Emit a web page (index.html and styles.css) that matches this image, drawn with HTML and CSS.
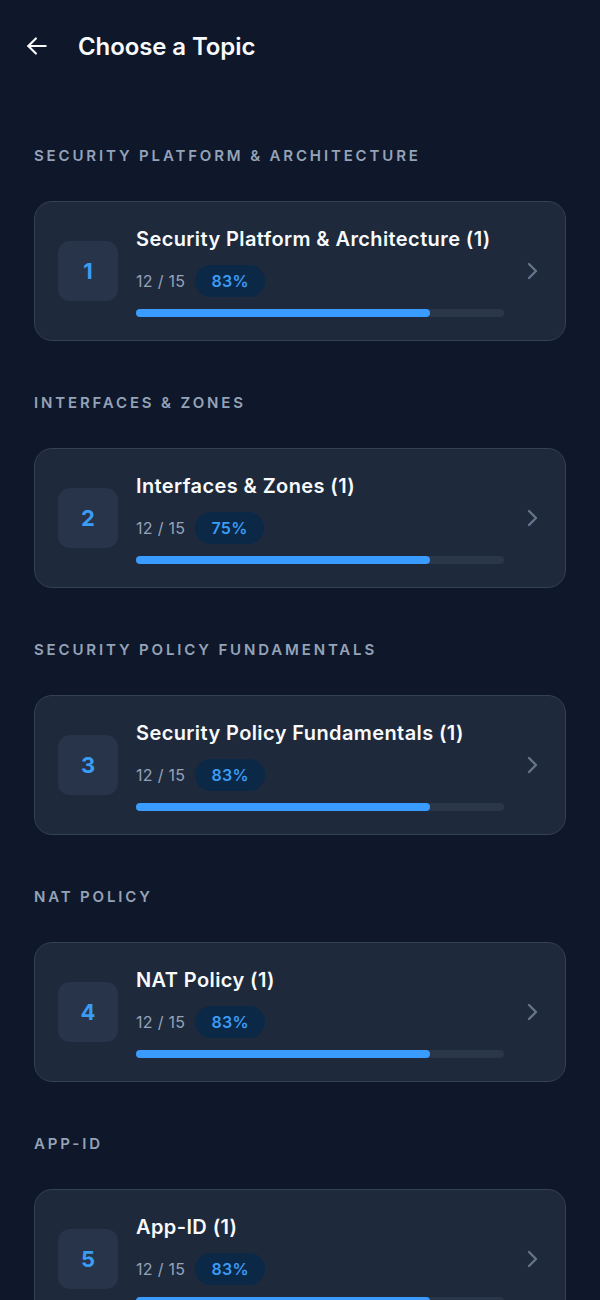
FILE: index.html
```html
<!DOCTYPE html>
<html lang="en">
<head>
    <meta charset="UTF-8">
    <meta name="viewport" content="width=device-width, initial-scale=1.0">
    <title>Choose a Topic</title>
    <link rel="stylesheet" href="styles.css">
</head>
<body>
    <header class="topbar">
        <button class="back" aria-label="Back">
            <svg width="26" height="26" viewBox="0 0 24 24" fill="none" stroke="currentColor" stroke-width="2" stroke-linecap="round" stroke-linejoin="round">
                <path d="M20 12H4"/>
                <path d="M11 5l-7 7 7 7"/>
            </svg>
        </button>
        <h1>Choose a Topic</h1>
    </header>

    <main class="topics">
        <section class="group">
            <h2 class="group-label">Security Platform &amp; Architecture</h2>
            <div class="card">
                <div class="num">1</div>
                <div class="info">
                    <div class="title">Security Platform &amp; Architecture (1)</div>
                    <div class="meta">
                        <span class="count">12 / 15</span>
                        <span class="pill">83%</span>
                    </div>
                    <div class="track"><div class="fill" style="width: 80%"></div></div>
                </div>
                <svg class="chev" width="20" height="20" viewBox="0 0 20 20" fill="none" stroke="currentColor" stroke-width="2.4" stroke-linecap="round" stroke-linejoin="round"><path d="M7 3l7 7-7 7"/></svg>
            </div>
        </section>

        <section class="group">
            <h2 class="group-label">Interfaces &amp; Zones</h2>
            <div class="card">
                <div class="num">2</div>
                <div class="info">
                    <div class="title">Interfaces &amp; Zones (1)</div>
                    <div class="meta">
                        <span class="count">12 / 15</span>
                        <span class="pill">75%</span>
                    </div>
                    <div class="track"><div class="fill" style="width: 80%"></div></div>
                </div>
                <svg class="chev" width="20" height="20" viewBox="0 0 20 20" fill="none" stroke="currentColor" stroke-width="2.4" stroke-linecap="round" stroke-linejoin="round"><path d="M7 3l7 7-7 7"/></svg>
            </div>
        </section>

        <section class="group">
            <h2 class="group-label">Security Policy Fundamentals</h2>
            <div class="card">
                <div class="num">3</div>
                <div class="info">
                    <div class="title">Security Policy Fundamentals (1)</div>
                    <div class="meta">
                        <span class="count">12 / 15</span>
                        <span class="pill">83%</span>
                    </div>
                    <div class="track"><div class="fill" style="width: 80%"></div></div>
                </div>
                <svg class="chev" width="20" height="20" viewBox="0 0 20 20" fill="none" stroke="currentColor" stroke-width="2.4" stroke-linecap="round" stroke-linejoin="round"><path d="M7 3l7 7-7 7"/></svg>
            </div>
        </section>

        <section class="group">
            <h2 class="group-label">NAT Policy</h2>
            <div class="card">
                <div class="num">4</div>
                <div class="info">
                    <div class="title">NAT Policy (1)</div>
                    <div class="meta">
                        <span class="count">12 / 15</span>
                        <span class="pill">83%</span>
                    </div>
                    <div class="track"><div class="fill" style="width: 80%"></div></div>
                </div>
                <svg class="chev" width="20" height="20" viewBox="0 0 20 20" fill="none" stroke="currentColor" stroke-width="2.4" stroke-linecap="round" stroke-linejoin="round"><path d="M7 3l7 7-7 7"/></svg>
            </div>
        </section>

        <section class="group">
            <h2 class="group-label">App-ID</h2>
            <div class="card">
                <div class="num">5</div>
                <div class="info">
                    <div class="title">App-ID (1)</div>
                    <div class="meta">
                        <span class="count">12 / 15</span>
                        <span class="pill">83%</span>
                    </div>
                    <div class="track"><div class="fill" style="width: 80%"></div></div>
                </div>
                <svg class="chev" width="20" height="20" viewBox="0 0 20 20" fill="none" stroke="currentColor" stroke-width="2.4" stroke-linecap="round" stroke-linejoin="round"><path d="M7 3l7 7-7 7"/></svg>
            </div>
        </section>
    </main>
</body>
</html>
```

FILE: styles.css
```css
html, body {
    background-color: #0f172a;
}

body {
    font-family: Inter, "Noto Sans", sans-serif;
    color: #f8fafc;
    margin: 0;
    padding: 0;
    overflow: hidden;
}

.topbar {
    display: flex;
    align-items: center;
    gap: 28px;
    height: 92px;
    padding: 0 24px;
}

.back {
    background: none;
    border: none;
    padding: 0;
    color: #f8fafc;
    display: flex;
    cursor: pointer;
}

h1 {
    font-size: 24px;
    font-weight: 600;
    margin: 0;
    letter-spacing: -0.1px;
}

.topics {
    display: flex;
    flex-direction: column;
    gap: 52px;
    padding: 54px 34px 0;
}

.group-label {
    font-size: 15px;
    font-weight: 600;
    line-height: 20px;
    letter-spacing: 2.85px;
    text-transform: uppercase;
    color: #94a3b8;
    margin: 0 0 35px;
}

.card {
    display: flex;
    align-items: center;
    height: 138px;
    padding: 0 23px;
    background-color: #1e293b;
    border: 1px solid #334155;
    border-radius: 18px;
}

.num {
    flex: none;
    width: 60px;
    height: 60px;
    border-radius: 12px;
    background-color: #273449;
    color: #3b9cf4;
    font-size: 22px;
    font-weight: 700;
    display: flex;
    align-items: center;
    justify-content: center;
}

.info {
    flex: 1;
    margin-left: 18px;
    display: flex;
    flex-direction: column;
}

.title {
    font-size: 20px;
    font-weight: 600;
    line-height: 28px;
    letter-spacing: 0.4px;
    color: #f8fafc;
}

.meta {
    display: flex;
    align-items: center;
    gap: 10px;
    margin-top: 12px;
}

.count {
    font-size: 16px;
    letter-spacing: 0.3px;
    color: #94a3b8;
}

.pill {
    background-color: #0b2847;
    color: #3b9cf4;
    font-size: 16px;
    font-weight: 600;
    letter-spacing: 0.4px;
    height: 32px;
    padding: 0 16px;
    border-radius: 16px;
    display: flex;
    align-items: center;
}

.track {
    margin-top: 12px;
    height: 8px;
    border-radius: 4px;
    background-color: #2a3649;
}

.fill {
    height: 100%;
    border-radius: 4px;
    background-color: #3b9cff;
}

.chev {
    flex: none;
    color: #64748b;
    margin-left: 18px;
}
```
